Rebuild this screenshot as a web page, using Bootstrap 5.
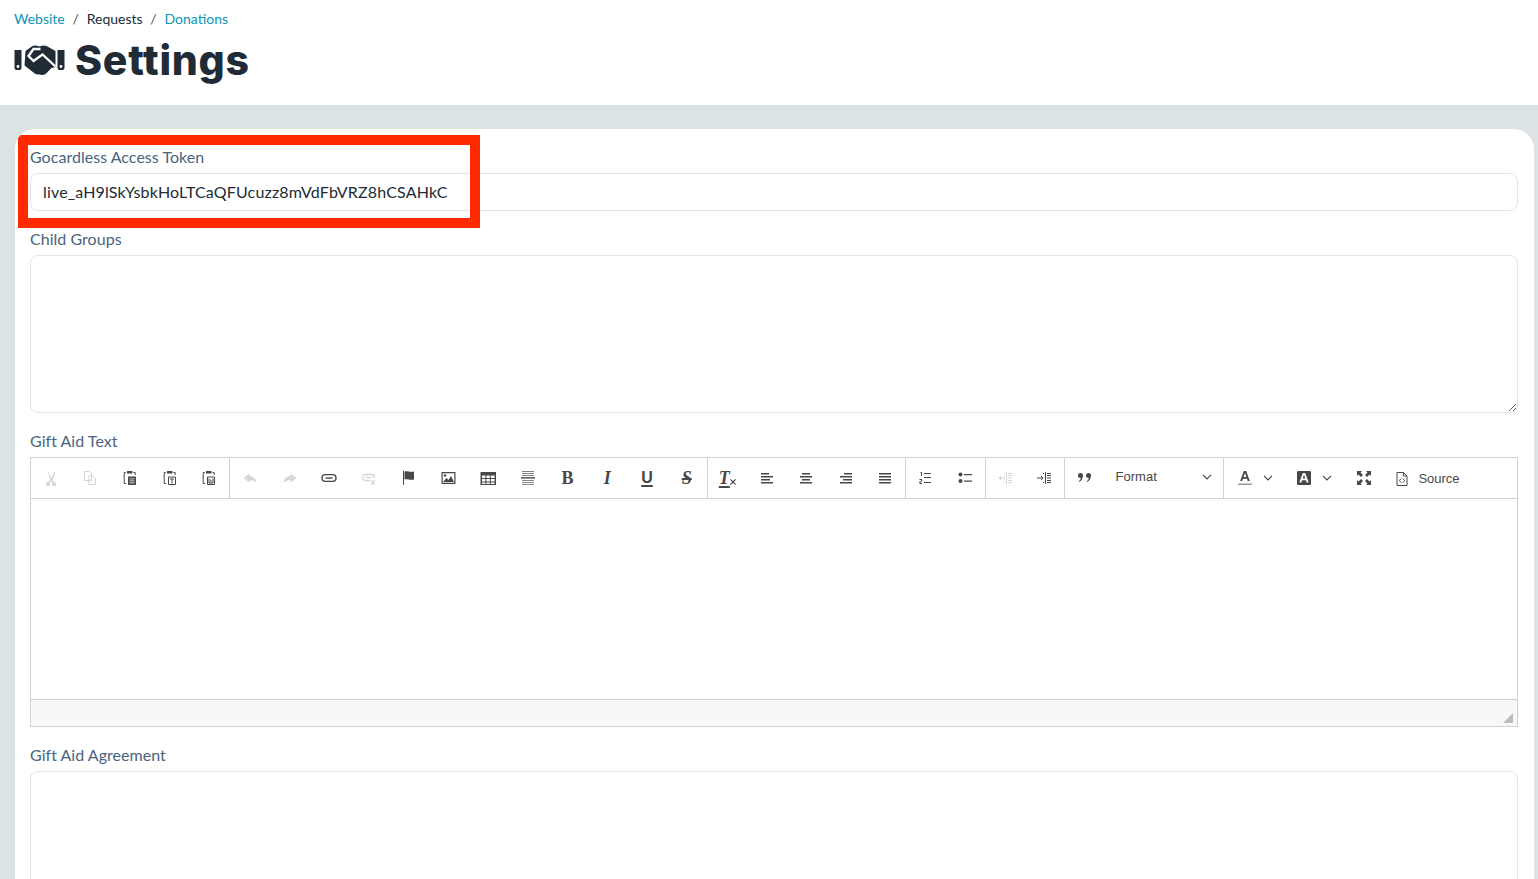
<!DOCTYPE html>
<html lang="en">
<head>
<meta charset="utf-8">
<title>Settings</title>
<link href="https://cdn.jsdelivr.net/npm/bootstrap@5.3.0/dist/css/bootstrap.min.css" rel="stylesheet">
<style>
html,body{height:879px;overflow:hidden}
body{background:#dce3e5;font-family:Lato,"Liberation Sans",sans-serif;color:#212b36;font-size:15px}
.top-head{background:#fff;height:105px;padding:10px 14px 0}
.crumbs{font-size:14px;line-height:18px;margin:0;--bs-breadcrumb-divider-color:#555;--bs-breadcrumb-item-padding-x:7.8px}
.crumbs a{color:#0a97b5;text-decoration:none}
.crumbs .breadcrumb-item.active{color:#212b36}
.page-title{font-family:Inter,sans-serif;font-weight:800;font-size:41px;line-height:50px;color:#212b36;margin:7px 0 0;gap:10px;letter-spacing:.75px}
.panel{position:relative;background:#fff;margin:24px 4px 0 15px;border-radius:20px 20px 0 0;padding:18px 16px 0 15px;height:750px;overflow:hidden}
.hilite{position:absolute;left:3px;top:6px;width:462px;height:93px;border:10px solid #ff2a00;pointer-events:none}
.fld-label{display:block;color:#4a6380;font-size:16px;line-height:20px;margin:0 0 6px;letter-spacing:.03px}
.fld-input{height:38px;border:1px solid #e1e4e8;border-radius:8px;padding:0 12px 2px;font-size:16px;letter-spacing:.16px;color:#212b36;font-family:Lato,sans-serif;box-shadow:none}
.fld-area{border:1px solid #e1e4e8;border-radius:8px;display:block;width:100%;box-shadow:none}
.gap-a{margin-bottom:18px}
.editor{border:1px solid #d1d1d1;height:270px;margin-bottom:18px}
.bar{height:41px;border-bottom:1px solid #d1d1d1}
.grp{border-right:1px solid #d1d1d1;height:40px}
.grp:last-child{border-right:0}
.tb{width:39.6px;height:40px;flex:none;color:#474747}
.grp-wide .tb{width:39.72px}
.grp-tight .tb{width:39.42px}
.grp-narrow .tb{width:39.1px}
.tb svg{width:16px;height:16px;display:block;fill:currentColor}
.tb.off{opacity:.22}
.glyph{font-family:"Liberation Serif",serif;font-weight:700;font-size:18px;line-height:16px;color:#474747}
.gsans{font-family:"Liberation Sans",sans-serif;font-size:16px}
.gi{font-style:italic}
.gu{text-decoration:underline;text-decoration-thickness:1.5px;text-underline-offset:2px}
.gs{text-decoration:line-through;text-decoration-thickness:1.5px}
.fmt{width:118.8px;height:40px;font-family:"Liberation Sans",sans-serif;font-size:13px;color:#484848;padding:0 11px 2px 11px}
.chev{width:10px;height:6px;fill:none;stroke:#474747;stroke-width:1.2;flex:none}
.colr{height:40px;flex:none;padding-left:13px;gap:10px}
.srcb{font-family:"Liberation Sans",sans-serif;font-size:13px;color:#484848;gap:9px;margin-left:13px;padding-top:1px}
.ed-body{height:200px}
.ed-foot{height:27px;background:#f8f8f8;border-top:1px solid #d1d1d1;position:relative}
.ed-grip{position:absolute;right:4px;bottom:3px;width:10px;height:10px;fill:#bdbdbd}
</style>
</head>
<body>
<svg width="0" height="0" class="position-absolute">
<defs>
<symbol id="clip" viewBox="0 0 16 16"><path d="M5 1h5.500v2.500H5z"/><path d="M3.800 2.500H2.200v11h2M11.500 2.500h1.700v2.500" fill="none" stroke="currentColor"/></symbol>
</defs>
</svg>
<header class="top-head">
<nav aria-label="breadcrumb"><ol class="breadcrumb crumbs">
<li class="breadcrumb-item"><a href="#">Website</a></li>
<li class="breadcrumb-item active">Requests</li>
<li class="breadcrumb-item"><a href="#">Donations</a></li>
</ol></nav>
<h1 class="page-title d-flex align-items-center">
<svg width="51" height="30" viewBox="0 0 50 30" fill="#212b36" aria-hidden="true"><path d="M0 5h7v18a2 2 0 0 1-2 2H2a2 2 0 0 1-2-2zM43 5h7v18a2 2 0 0 1-2 2h-3a2 2 0 0 1-2-2z"/><circle cx="3.500" cy="21.500" r="1.400" fill="#fff"/><circle cx="46.500" cy="21.500" r="1.400" fill="#fff"/><path d="M11 6l7-5q3-1 7 .5 4-1.500 7-.5l9 5v16l-4 1-6 6q-3 1.500-6 .5-4 .5-6-2l-9-7z"/><path d="M26 4H19L14 11l5 5 9-6.500 13 12" fill="none" stroke="#fff" stroke-width="2.300"/></svg>
<span>Settings</span>
</h1>
</header>
<main class="panel">
<div class="hilite"></div>
<div class="gap-a"><label class="fld-label" for="tok">Gocardless Access Token</label>
<input id="tok" class="form-control fld-input" value="live_aH9lSkYsbkHoLTCaQFUcuzz8mVdFbVRZ8hCSAHkC"></div>
<div class="gap-a"><label class="fld-label" for="cg">Child Groups</label>
<textarea id="cg" class="form-control fld-area" style="height:158px"></textarea></div>
<label class="fld-label">Gift Aid Text</label>
<div class="editor">
<div class="bar d-flex">
<div class="grp d-flex">
<div class="tb off d-flex align-items-center justify-content-center"><svg viewBox="0 0 16 16"><path d="M4.500 1l4 7.500 3-7 .8 2-2.600 6.500 1 2a2.200 2.200 0 1 1-1.300.8L8 10.800l-1.300 2.100a2.200 2.200 0 1 1-1.400-.8l1.700-2.800z"/></svg></div>
<div class="tb off d-flex align-items-center justify-content-center"><svg viewBox="0 0 16 16" fill="none"><path d="M2.500 1.500h5l2 2v7h-7zM7 5.500h3l3.500 3v6H7z" style="fill:none;stroke:currentColor"/></svg></div>
<div class="tb d-flex align-items-center justify-content-center"><svg viewBox="0 0 16 16"><use href="#clip"/><path d="M6 6.500h8v8.500H6zM7.500 8.500h5v.8h-5zM7.500 10.500h5v.8h-5zM7.500 12.500h5v.8h-5z" fill-rule="evenodd"/></svg></div>
<div class="tb d-flex align-items-center justify-content-center"><svg viewBox="0 0 16 16"><use href="#clip"/><path d="M6.500 7h7v7.500h-7z" style="fill:none;stroke:currentColor"/><path d="M8 8.500h4v1H10.500v4h-1v-4H8z"/></svg></div>
<div class="tb d-flex align-items-center justify-content-center"><svg viewBox="0 0 16 16"><use href="#clip"/><path d="M6.500 7h7v7.500h-7z" style="fill:none;stroke:currentColor"/><path d="M8 8.500v4.500h4V8.500" style="fill:none;stroke:currentColor"/><path d="M10 9.500v3" style="fill:none;stroke:currentColor"/></svg></div>
</div>
<div class="grp grp-wide d-flex">
<div class="tb off d-flex align-items-center justify-content-center"><svg viewBox="0 0 16 16"><path d="M7.500 3.500L1.500 8l6 4.500V10c3 0 5 .8 7 3-.5-4-3-6.800-7-7.300z"/></svg></div>
<div class="tb off d-flex align-items-center justify-content-center"><svg viewBox="0 0 16 16"><path d="M8.500 3.500l6 4.500-6 4.500V10c-3 0-5 .8-7 3 .5-4 3-6.800 7-7.300z"/></svg></div>
<div class="tb d-flex align-items-center justify-content-center"><svg viewBox="0 0 16 16"><rect x="1" y="4.600" width="14" height="6.800" rx="3.400" style="fill:none;stroke:currentColor;stroke-width:1.400"/><path d="M4.500 7.300h7v1.400h-7z"/></svg></div>
<div class="tb off d-flex align-items-center justify-content-center"><svg viewBox="0 0 16 16"><path d="M9 10.500H4.500a3 3 0 0 1 0-6h6a3 3 0 0 1 3 3" style="fill:none;stroke:currentColor;stroke-width:1.300"/><path d="M4.500 6.900h6v1.300h-6z"/><path d="M9.500 10.500l1.200-.5 1.300 1.500 1.300-1.500 1 .7L13 12.500l1.500 1.700-1 .8-1.500-1.600L10.500 15l-1-.8 1.500-1.700z"/></svg></div>
<div class="tb d-flex align-items-center justify-content-center"><svg viewBox="0 0 16 16"><path d="M2 .8h1v14H2z"/><path d="M3.500 1.500c3-1 5 1 9.500 0v8c-4.500 1-6.500-1-9.500 0z"/></svg></div>
<div class="tb d-flex align-items-center justify-content-center"><svg viewBox="0 0 16 16"><path d="M1.500 2h14v12h-14zM2.700 3.200v9.600h11.600V3.200z" fill-rule="evenodd"/><circle cx="5" cy="5.500" r="1.300"/><path d="M3 12l3.500-4 2 2 2.500-4 3 6z"/></svg></div>
<div class="tb d-flex align-items-center justify-content-center"><svg viewBox="0 0 16 16"><path d="M0.500 2h15.500v13H.5zM2 5.500v2.500h3.400V5.500zM6.400 5.500v2.500h3.400V5.500zM10.800 5.500v2.500h3.800V5.500zM2 9v2.500h3.400V9zM6.400 9v2.500h3.400V9zM10.800 9v2.500h3.800V9zM2 12.500V14h3.400v-1.500zM6.400 12.500V14h3.400v-1.500zM10.800 12.500V14h3.800v-1.500z" fill-rule="evenodd"/></svg></div>
<div class="tb d-flex align-items-center justify-content-center"><svg viewBox="0 0 16 16"><path d="M2 1h12v1H2zM2 3h12v1H2zM2 5h12v1H2z" opacity=".65"/><path d="M1 7.200h14v1.400H1z"/><path d="M2 10h12v1H2zM2 12h12v1H2zM2 14h12v1H2z" opacity=".65"/></svg></div>
<div class="tb d-flex align-items-center justify-content-center"><span class="glyph">B</span></div>
<div class="tb d-flex align-items-center justify-content-center"><span class="glyph gi">I</span></div>
<div class="tb d-flex align-items-center justify-content-center"><span class="glyph gsans gu">U</span></div>
<div class="tb d-flex align-items-center justify-content-center"><span class="glyph gi gs">S</span></div>
</div>
<div class="grp grp-tight d-flex">
<div class="tb d-flex align-items-center justify-content-center"><span class="glyph gi gu">T</span><svg viewBox="0 0 6 6" style="width:6px;height:6px;margin:8px 0 0 0"><path d="M.5 0l2.500 2 2.500-2 .5.800L3.800 3 6 5.200l-.5.800L3 4 .5 6 0 5.200 2.200 3 0 .8z"/></svg></div>
<div class="tb d-flex align-items-center justify-content-center"><svg viewBox="0 0 16 16"><path d="M2 3h8v1.500H2zM2 6h12v1.500H2zM2 9h9v1.500H2zM2 12h12v1.500H2z"/></svg></div>
<div class="tb d-flex align-items-center justify-content-center"><svg viewBox="0 0 16 16"><path d="M4 3h8v1.500H4zM2 6h12v1.500H2zM4 9h8v1.500H4zM2 12h12v1.500H2z"/></svg></div>
<div class="tb d-flex align-items-center justify-content-center"><svg viewBox="0 0 16 16"><path d="M6 3h8v1.500H6zM2 6h12v1.500H2zM5 9h9v1.500H5zM2 12h12v1.500H2z"/></svg></div>
<div class="tb d-flex align-items-center justify-content-center"><svg viewBox="0 0 16 16"><path d="M2 3h12v1.500H2zM2 6h12v1.500H2zM2 9h12v1.500H2zM2 12h12v1.500H2z"/></svg></div>
</div>
<div class="grp d-flex">
<div class="tb d-flex align-items-center justify-content-center"><svg viewBox="0 0 16 16"><path d="M7 3h7v1H7zM7 7h7v1H7zM7 12h7v1H7zM3.500 2H5v4H4V3h-.5zM2.500 9H5v2.500H3.500V13H5v1H2.500v-3H4v-1H2.500z"/></svg></div>
<div class="tb d-flex align-items-center justify-content-center"><svg viewBox="0 0 16 16"><circle cx="3.500" cy="4.500" r="2"/><circle cx="3.500" cy="11" r="2"/><path d="M7 4h8v1.200H7zM7 10.500h8v1.200H7z"/></svg></div>
</div>
<div class="grp grp-narrow d-flex">
<div class="tb off d-flex align-items-center justify-content-center"><svg viewBox="0 0 16 16"><path d="M9 2h1v12H9zM11 3h4v1h-4zM11 5h4v1h-4zM11 7.500h4v1h-4zM11 10h4v1h-4zM11 12h4v1h-4zM2 7.500h5v1H2zM4 5.500v5L1.500 8zM7 3h1v1H7zM7 6h1v1H7zM7 9h1v1H7zM7 12h1v1H7z"/></svg></div>
<div class="tb d-flex align-items-center justify-content-center"><svg viewBox="0 0 16 16"><path d="M9 2h1v12H9zM11 3h4v1h-4zM11 5h4v1h-4zM11 7.500h4v1h-4zM11 10h4v1h-4zM11 12h4v1h-4zM1 7.500h5v1H1zM5 5.500v5L7.500 8zM7 3h1v1H7zM7 12h1v1H7z"/></svg></div>
</div>
<div class="grp d-flex">
<div class="tb d-flex align-items-center justify-content-center"><svg viewBox="0 0 16 16"><circle cx="3.500" cy="5.500" r="2.500"/><path d="M5.500 6c.3 3-1 5-3.500 6l-.3-.8C3 10.500 4 9 3.800 7z"/><circle cx="11.500" cy="5.500" r="2.500"/><path d="M13.500 6c.3 3-1 5-3.500 6l-.3-.8C11 10.500 12 9 11.800 7z"/></svg></div>
<div class="fmt d-flex align-items-center justify-content-between"><span>Format</span><svg class="chev" viewBox="0 0 10 6"><path d="M1 .8l4 4 4-4"/></svg></div>
</div>
<div class="d-flex">
<div class="colr d-flex align-items-center" style="width:62px"><svg width="16" height="16" viewBox="0 0 16 16" fill="#474747"><path d="M6.800 1h2.400l3.600 10h-2l-.8-2.300H6L5.200 11h-2zM6.600 7h2.800L8 3z" fill-rule="evenodd"/><path d="M1 13.500h14V15H1z" fill="#999"/></svg><svg class="chev" viewBox="0 0 10 6"><path d="M1 .8l4 4 4-4"/></svg></div>
<div class="colr d-flex align-items-center" style="width:60px;padding-left:10px"><svg width="16" height="16" viewBox="0 0 16 16" fill="#474747"><path d="M2 1h12a1.500 1.500 0 0 1 1 1v12a1.500 1.500 0 0 1-1 1H2a1.500 1.500 0 0 1-1-1V2a1.500 1.500 0 0 1 1-1zM6.800 3l-3.500 9.500h2l.8-2.300h3.800l.8 2.300h2L9.200 3zM6.700 8.500L8 4.800l1.300 3.700z" fill-rule="evenodd"/></svg><svg class="chev" viewBox="0 0 10 6"><path d="M1 .8l4 4 4-4"/></svg></div>
<div class="tb d-flex align-items-center justify-content-center" style="width:36px"><svg viewBox="0 0 16 16"><path d="M1 1h5L4.500 2.500 7 5 5 7 2.500 4.500 1 6zM15 1v5l-1.500-1.500L11 7 9 5l2.500-2.500L10 1zM1 15v-5l1.500 1.500L5 9l2 2-2.500 2.500L6 15zM15 15h-5l1.500-1.500L9 11l2-2 2.500 2.500L15 10z"/></svg></div>
<div class="srcb d-flex align-items-center"><svg width="14" height="16" viewBox="0 0 14 16" fill="none" stroke="#474747"><path d="M2 1.500h6.500l3.500 3.500v9.500H2zM8.500 1.500V5H12"/><path d="M6 7.500L4.500 9.500 6 11.500M8 7.500l1.500 2L8 11.500"/></svg><span>Source</span></div>
</div>
</div>
<div class="ed-body"></div>
<div class="ed-foot"><svg class="ed-grip" viewBox="0 0 10 10"><path d="M10 0v10H0z"/></svg></div>
</div>
<div><label class="fld-label">Gift Aid Agreement</label>
<textarea class="form-control fld-area" style="height:158px" aria-label="Gift Aid Agreement"></textarea></div>
</main>
</body>
</html>
